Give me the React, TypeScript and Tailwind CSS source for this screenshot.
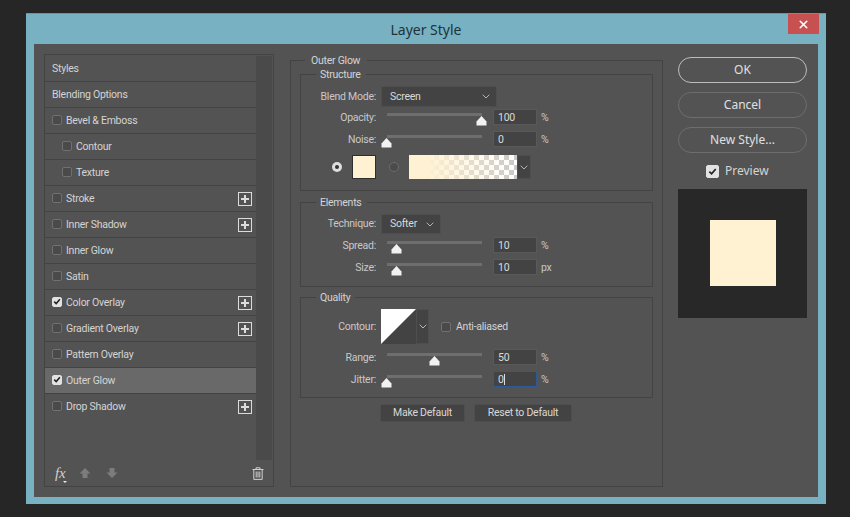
import { X } from "lucide-react";

const styleRows = [
  { label: "Styles", plain: true },
  { label: "Blending Options", plain: true },
  { label: "Bevel & Emboss" },
  { label: "Contour", indent: true },
  { label: "Texture", indent: true },
  { label: "Stroke", plus: true },
  { label: "Inner Shadow", plus: true },
  { label: "Inner Glow" },
  { label: "Satin" },
  { label: "Color Overlay", checked: true, plus: true },
  { label: "Gradient Overlay", plus: true },
  { label: "Pattern Overlay" },
  { label: "Outer Glow", checked: true, active: true },
  { label: "Drop Shadow", plus: true, last: true },
];

function Check({ checked, size = "small" }: { checked?: boolean; size?: "small" | "large" }) {
  const box = size === "large" ? "w-[13px] h-[13px]" : "w-[10px] h-[10px]";
  return (
    <span
      className={`${box} shrink-0 rounded-[2px] border flex items-center justify-center ${
        checked ? "bg-[#e2e2e2] border-[#e2e2e2]" : "bg-[#4a4a4a] border-[#707070]"
      }`}
    >
      {checked && (
        <svg viewBox="0 0 10 10" className="w-[9px] h-[9px]">
          <path d="M1.5 5.2 L4 7.6 L8.6 2.2" fill="none" stroke="#222" strokeWidth="1.9" />
        </svg>
      )}
    </span>
  );
}

function StyleRow({ row }: { row: (typeof styleRows)[number] }) {
  return (
    <div
      className={`h-[26px] flex items-center border-b ${row.last ? "border-transparent" : "border-[#434343]"} ${
        row.active ? "bg-[#696969]" : ""
      } ${row.indent ? "pl-[17px]" : "pl-[7px]"} pr-[4px]`}
    >
      {!row.plain && (
        <span className="-mt-[2px]">
          <Check checked={row.checked} />
        </span>
      )}
      <span className={`${row.plain ? "" : "ml-[4px]"} text-[10.5px] text-[#d4d4d4]`}>{row.label}</span>
      {row.plus && (
        <span className="ml-auto w-[14px] h-[14px] border border-[#dcdcdc] flex items-center justify-center">
          <svg viewBox="0 0 10 10" className="w-[10px] h-[10px]">
            <path d="M5 1 V9 M1 5 H9" stroke="#dcdcdc" strokeWidth="2" />
          </svg>
        </span>
      )}
    </div>
  );
}

function Group({ title, className, children }: { title: string; className?: string; children: React.ReactNode }) {
  return (
    <fieldset className={`border border-[#434343] ${className ?? ""}`}>
      <legend className="ml-[15px] pl-[4px] pr-[5px] h-[14px] leading-[16px] text-[10.5px] text-[#d4d4d4]">{title}</legend>
      {children}
    </fieldset>
  );
}

function Label({ children, low }: { children: React.ReactNode; low?: boolean }) {
  return (
    <span className={`w-[75px] shrink-0 text-right text-[10.5px] text-[#c8c8c8] ${low ? "pt-[2px]" : ""}`}>{children}</span>
  );
}

function Dropdown({ value, width }: { value: string; width: string }) {
  return (
    <div className={`${width} ml-[5px] h-full flex items-center justify-between pl-[8px] pr-[6px] bg-[#434343] border border-[#4e4e4e] rounded-[2px]`}>
      <span className="text-[10.5px] text-[#d8d8d8]">{value}</span>
      <Chevron />
    </div>
  );
}

function Chevron() {
  return (
    <svg viewBox="0 0 8 5" className="w-[8px] h-[5px]">
      <path d="M0.7 0.7 L4 4 L7.3 0.7" fill="none" stroke="#b5b5b5" strokeWidth="1" />
    </svg>
  );
}

function SliderRow({
  label,
  value,
  unit,
  focused,
  className,
}: {
  label: string;
  value: number;
  unit: string;
  focused?: boolean;
  className?: string;
}) {
  return (
    <div className={`h-[16px] flex items-center ${className ?? ""}`}>
      <Label low>{label}</Label>
      <div className="relative ml-[11px] w-[95px] h-[16px] shrink-0">
        <div className="mt-[4px] h-[3px] bg-[#6e6e6e]" />
        <svg
          viewBox="0 0 11 10"
          className="absolute top-[7px] w-[11px] h-[10px]"
          style={{ left: `${value * 0.95 - 6}px` }}
        >
          <path d="M5.5 0 L10.5 5.5 V9.5 H0.5 V5.5 Z" fill="#f2f2f2" />
        </svg>
      </div>
      <div
        className={`ml-[11px] w-[44px] h-[16px] shrink-0 flex items-center pl-[4px] bg-[#434343] border ${
          focused ? "border-[#2d5a94]" : "border-[#595959]"
        }`}
      >
        <span className="pt-[1px] text-[10.5px] text-[#dcdcdc]">{value}</span>
        {focused && <span className="w-px h-[11px] bg-[#dcdcdc]" />}
      </div>
      <span className="ml-[4px] pt-[2px] text-[10.5px] text-[#c8c8c8]">{unit}</span>
    </div>
  );
}

function Radio({ on }: { on?: boolean }) {
  return (
    <span
      className={`w-[10px] h-[10px] rounded-full flex items-center justify-center ${
        on ? "bg-[#dedede]" : "bg-[#4b4b4b] border border-[#6b6b6b]"
      }`}
    >
      {on && <span className="w-[4px] h-[4px] rounded-full bg-[#333]" />}
    </span>
  );
}

function PillButton({ label, primary }: { label: string; primary?: boolean }) {
  return (
    <div
      className={`h-[26px] rounded-full flex items-center justify-center text-[12px] tracking-normal text-[#e0e0e0] ${
        primary ? "border-[1.5px] border-[#bdbdbd]" : "border border-[#6d6d6d]"
      }`}
      style={{ fontFamily: '"Noto Sans", sans-serif' }}
    >
      {label}
    </div>
  );
}

export default function App() {
  return (
    <div
      className="w-[850px] h-[517px] overflow-hidden bg-[#262626] pl-[26px] pt-[13px] tracking-[-0.25px]"
      style={{ fontFamily: 'Roboto, "Noto Sans", sans-serif' }}
    >
      <div className="relative w-[800px] h-[491px] bg-[#78b2c2] border-t border-[#5f98a8] px-[8px]">
        {/* Title bar */}
        <div
          className="h-[30px] flex items-center justify-center text-[14px] tracking-normal text-[#20333a]"
          style={{ fontFamily: '"Noto Sans", sans-serif' }}
        >
          Layer Style
        </div>
        <div className="absolute top-0 right-[7px] w-[31px] h-[20px] bg-[#c75050] flex items-center justify-center">
          <X size={13} strokeWidth={3} color="#fff" />
        </div>

        <div className="h-[453px] bg-[#535353] flex pl-[10px] pt-[9px]">
          {/* Style list */}
          <div className="mt-[1px] w-[230px] h-[433px] shrink-0 border border-[#434343] flex flex-col">
            <div className="flex h-[404px] mt-[1px]">
              <div className="w-[211px] shrink-0">
                {styleRows.map((row) => (
                  <StyleRow key={row.label} row={row} />
                ))}
              </div>
              <div className="w-[16px] bg-[#4a4a4a]" />
            </div>
            <div className="flex-1 flex items-center pl-[10px] pr-[9px] text-[#b5b5b5]">
              <span className="relative text-[15px] italic leading-none text-[#d0d0d0]" style={{ fontFamily: '"Liberation Serif", serif' }}>
                fx
                <span className="absolute -right-[2px] -bottom-[2px] w-0 h-0 border-x-[2px] border-t-[2px] border-x-transparent border-t-[#eee]" />
              </span>
              <svg viewBox="0 0 12 12" className="ml-[14px] w-[12px] h-[12px]">
                <path d="M6 1 L11.5 6.5 H8.5 V11 H3.5 V6.5 H0.5 Z" fill="#7c7c7c" />
              </svg>
              <svg viewBox="0 0 12 12" className="ml-[15px] w-[12px] h-[12px]">
                <path d="M6 11 L11.5 5.5 H8.5 V1 H3.5 V5.5 H0.5 Z" fill="#7c7c7c" />
              </svg>
              <svg viewBox="0 0 12 13" className="ml-auto w-[12px] h-[13px]">
                <path
                  d="M0.5 2.5 H11.5 M4 2.5 V0.8 H8 V2.5 M1.8 2.5 V12.4 H10.2 V2.5 M4.2 4.5 V10.5 M6 4.5 V10.5 M7.8 4.5 V10.5"
                  fill="none"
                  stroke="#d0d0d0"
                  strokeWidth="1"
                />
              </svg>
            </div>
          </div>

          {/* Settings */}
          <fieldset className="ml-[16px] w-[373px] h-[434px] shrink-0 border border-[#434343] px-[9px]">
            <legend className="ml-[5px] pl-[6px] pr-[7px] h-[14px] leading-[16px] text-[10.5px] text-[#d4d4d4]">Outer Glow</legend>

            <Group title="Structure" className="pt-[5px] pb-[11px]">
              <div className="h-[21px] flex items-center">
                <Label>Blend Mode:</Label>
                <Dropdown value="Screen" width="w-[116px]" />
              </div>
              <SliderRow label="Opacity:" value={100} unit="%" className="mt-[2px]" />
              <SliderRow label="Noise:" value={0} unit="%" className="mt-[6px]" />
              <div className="mt-[8px] h-[24px] flex items-center">
                <span className="ml-[31px]">
                  <Radio on />
                </span>
                <div className="ml-[10px] w-[24px] h-[24px] bg-[#fff2d3] border border-[#2e2e2e]" />
                <span className="ml-[13px]">
                  <Radio />
                </span>
                <div className="ml-[10px] w-[108px] h-[24px] bg-[repeating-conic-gradient(#c9c9c9_0_25%,#ffffff_0_50%)] bg-[length:10px_10px]">
                  <div className="h-full bg-linear-to-r from-[#fff2d3] from-15% to-[#fff2d3]/0" />
                </div>
                <div className="w-[14px] h-[24px] bg-[#434343] border border-[#4e4e4e] flex items-center justify-center">
                  <Chevron />
                </div>
              </div>
            </Group>

            <Group title="Elements" className="mt-[4px] pt-[5px] pb-[11px]">
              <div className="h-[20px] flex items-center">
                <Label>Technique:</Label>
                <Dropdown value="Softer" width="w-[60px]" />
              </div>
              <SliderRow label="Spread:" value={10} unit="%" className="mt-[3px]" />
              <SliderRow label="Size:" value={10} unit="px" className="mt-[6px]" />
            </Group>

            <Group title="Quality" className="mt-[3px] pt-[5px] pb-[10px]">
              <div className="h-[35px] flex items-center">
                <Label>Contour:</Label>
                <svg viewBox="0 0 35 35" className="ml-[5px] w-[35px] h-[35px]">
                  <rect width="35" height="35" fill="#434343" />
                  <path d="M0 0 H35 L0 35 Z" fill="#ffffff" />
                </svg>
                <div className="w-[13px] h-[35px] bg-[#434343] border border-[#4e4e4e] flex items-center justify-center">
                  <Chevron />
                </div>
                <span className="ml-[12px]">
                  <Check />
                </span>
                <span className="ml-[5px] text-[10.5px] text-[#d4d4d4]">Anti-aliased</span>
              </div>
              <SliderRow label="Range:" value={50} unit="%" className="mt-[5px]" />
              <SliderRow label="Jitter:" value={0} unit="%" focused className="mt-[6px]" />
            </Group>

            <div className="mt-[6px] ml-[80px] flex gap-[9px]">
              <div className="w-[85px] h-[18px] bg-[#434343] border border-[#4e4e4e] rounded-[2px] flex items-center justify-center text-[10.5px] text-[#d8d8d8]">
                Make Default
              </div>
              <div className="w-[98px] h-[18px] bg-[#434343] border border-[#4e4e4e] rounded-[2px] flex items-center justify-center text-[10.5px] text-[#d8d8d8]">
                Reset to Default
              </div>
            </div>
          </fieldset>

          {/* Buttons and preview */}
          <div className="ml-[15px] w-[129px] shrink-0 pt-[4px] flex flex-col">
            <PillButton label="OK" primary />
            <div className="mt-[9px]">
              <PillButton label="Cancel" />
            </div>
            <div className="mt-[9px]">
              <PillButton label="New Style..." />
            </div>
            <div className="mt-[11px] h-[14px] pl-[28px] flex items-center gap-[6px]">
              <Check checked size="large" />
              <span className="text-[12px] tracking-normal text-[#d4d4d4]" style={{ fontFamily: '"Noto Sans", sans-serif' }}>
                Preview
              </span>
            </div>
            <div className="mt-[11px] h-[129px] bg-[#282828] flex items-center justify-center">
              <div className="w-[66px] h-[66px] -mt-[1px] bg-[#fff2d3]" />
            </div>
          </div>
        </div>
      </div>
    </div>
  );
}
